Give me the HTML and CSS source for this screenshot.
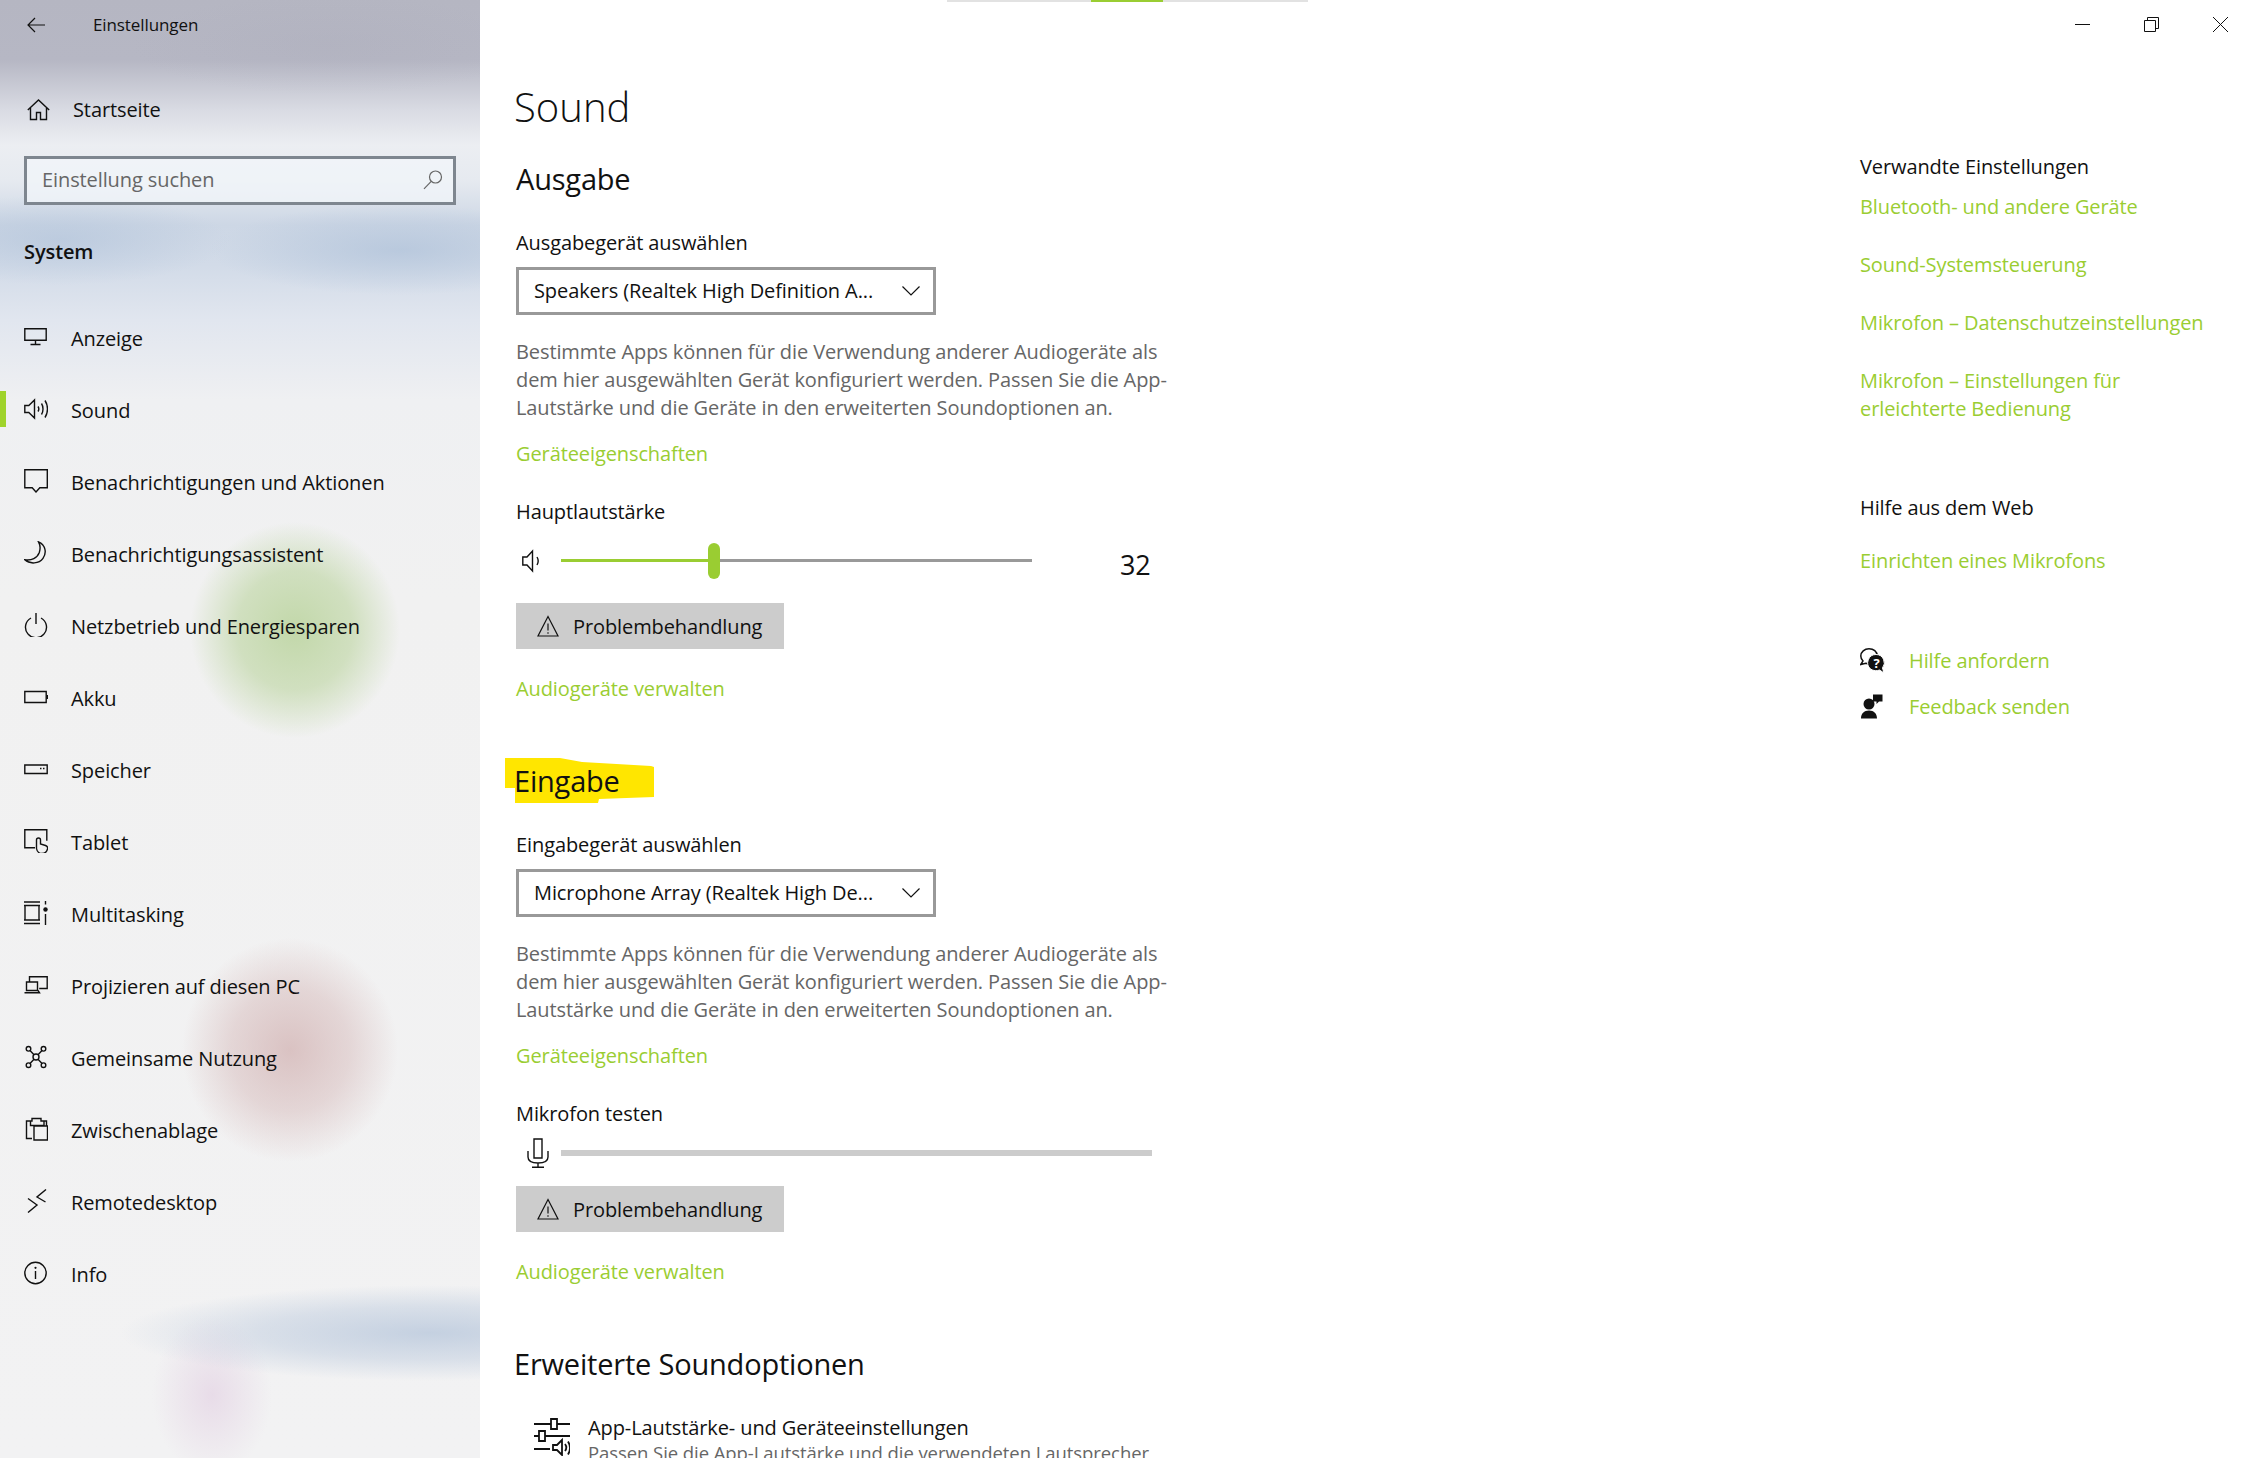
FILE: index.html
```html
<!DOCTYPE html>
<html lang="de">
<head>
<meta charset="utf-8">
<title>Einstellungen – Sound</title>
<link rel="stylesheet" href="styles.css">
</head>
<body>
<div class="window">
  <aside class="sidebar">
    <div class="side-head">
      <svg class="back" width="18" height="16" viewBox="0 0 18 16"><path d="M18 8H1M8 1 1 8l7 7"/></svg>
      <span class="app-title">Einstellungen</span>
    </div>
    <div class="home-row">
      <svg class="ico" width="24" height="24" viewBox="0 0 24 24"><path d="M.8 12 11.500 2 22.200 12M3.500 10v11.500h6v-7h4v7h6V10"/></svg>
      <span>Startseite</span>
    </div>
    <div class="search">
      <span class="search-text">Einstellung suchen</span>
      <svg class="search-ico" width="20" height="20" viewBox="0 0 20 20"><circle cx="12.500" cy="7" r="6"/><path d="M8.200 11.300 1 18.800"/></svg>
    </div>
    <div class="group">System</div>
    <nav class="nav">
      <div class="nav-item"><svg class="ico" width="24" height="24" viewBox="0 0 24 24"><path d="M.8 3.800h21.400v11.500H.8zM11.500 15.500v3.500M6.500 19.500h10"/></svg><span>Anzeige</span></div>
      <div class="nav-item active"><svg class="ico" width="24" height="24" viewBox="0 0 24 24"><path d="M.8 8.500h4L10.500 3v18l-5.700-5.500h-4zM14 9.500c1 1.500 1 3.500 0 5M17.500 6.500c2 3 2 8 0 11M21 3.500c3.300 5 3.300 12 0 17"/></svg><span>Sound</span></div>
      <div class="nav-item"><svg class="ico" width="24" height="24" viewBox="0 0 24 24"><path d="M.8.800h22.500v18h-7.500L12 23l-3.800-4.200H.8z"/></svg><span>Benachrichtigungen und Aktionen</span></div>
      <div class="nav-item"><svg class="ico" width="24" height="24" viewBox="0 0 24 24"><path d="M14.500.8c7 3 8.500 11 4.500 16.500S6 23.500.8 18.800c6.700 1.200 12.500-1.800 14.500-7.300 1.200-3.700 1-7.500-.8-10.700z"/></svg><span>Benachrichtigungsassistent</span></div>
      <div class="nav-item"><svg class="ico" width="24" height="24" viewBox="0 0 24 24"><path d="M7 5a10.500 10.500 0 1 0 10 0M12 0v11"/></svg><span>Netzbetrieb und Energiesparen</span></div>
      <div class="nav-item"><svg class="ico" width="24" height="24" viewBox="0 0 24 24"><path d="M.8 6.500h21.400v11H.8z"/><path class="solid" d="M22.500 10h1.500v4h-1.500z"/></svg><span>Akku</span></div>
      <div class="nav-item"><svg class="ico" width="24" height="24" viewBox="0 0 24 24"><path d="M.8 8h22.400v8.500H.8zM16 11.500h1.500M19 11.500h1.500"/></svg><span>Speicher</span></div>
      <div class="nav-item"><svg class="ico" width="24" height="24" viewBox="0 0 24 24"><path d="M11 18.800H.8V.8h22v11M12.500 19v-8a2 2 0 0 1 4 0v4l5 1.500c2 .8 2.500 2 2 3.500-.7 3-3 4.500-5.500 4.500s-5-2-5.500-5z"/></svg><span>Tablet</span></div>
      <div class="nav-item"><svg class="ico" width="24" height="24" viewBox="0 0 24 24"><path d="M0 1h16M0 4.500h16M1 4.500v14.500M15 4.500v14.500M0 19h16M0 22.500h16M21.500 0v3.500M21.500 13v11"/><circle class="solid" cx="21.500" cy="8.500" r="2.200"/></svg><span>Multitasking</span></div>
      <div class="nav-item"><svg class="ico" width="24" height="24" viewBox="0 0 24 24"><path d="M5.500 9V3.800h17.700v11.700h-8M2.500 9h11v8.500h-11zM.5 19.800h15l-1.500-2.300"/></svg><span>Projizieren auf diesen PC</span></div>
      <div class="nav-item"><svg class="ico" width="24" height="24" viewBox="0 0 24 24"><circle cx="12" cy="12" r="3"/><circle cx="4.500" cy="3.800" r="2.300"/><circle cx="19.500" cy="3.800" r="2.300"/><circle cx="4.500" cy="20.200" r="2.300"/><circle cx="19.500" cy="20.200" r="2.300"/><path d="M6 5.500 10 9.800M18 5.500 14 9.800M6 18.500l4-4.300M18 18.500l-4-4.300"/></svg><span>Gemeinsame Nutzung</span></div>
      <div class="nav-item"><svg class="ico" width="24" height="24" viewBox="0 0 24 24"><path d="M8 21.500H2.500V4H7M18 4h4.500v5M8 4V1.500h9V4h3v4.500H6.500V4zM10 9h13.500v14H10z"/></svg><span>Zwischenablage</span></div>
      <div class="nav-item"><svg class="ico" width="24" height="24" viewBox="0 0 24 24"><path d="M4 9.500l9 6.500-9 7.500M22 .5l-9 7.500 8.500 5"/></svg><span>Remotedesktop</span></div>
      <div class="nav-item"><svg class="ico" width="24" height="24" viewBox="0 0 24 24"><circle cx="11.500" cy="12" r="10.700"/><path d="M11.500 10v8"/><circle class="solid" cx="11.500" cy="6.800" r="1.100"/></svg><span>Info</span></div>
    </nav>
  </aside>

  <main class="content">
    <div class="strip"><span class="strip-done"></span></div>
    <div class="columns">
      <section class="page">
        <h1 class="title">Sound</h1>
        <h2 class="heading">Ausgabe</h2>
        <div class="label">Ausgabegerät auswählen</div>
        <div class="select"><span>Speakers (Realtek High Definition A...</span><svg class="chev" width="18" height="10" viewBox="0 0 18 10"><path d="M.5.500 9 9 17.500.5"/></svg></div>
        <p class="desc">Bestimmte Apps können für die Verwendung anderer Audiogeräte als<br>dem hier ausgewählten Gerät konfiguriert werden. Passen Sie die App-<br>Lautstärke und die Geräte in den erweiterten Soundoptionen an.</p>
        <a class="link link-props">Geräteeigenschaften</a>
        <div class="label label-gap">Hauptlautstärke</div>
        <div class="volume">
          <svg class="vol-ico" width="20" height="24" viewBox="0 0 20 24"><path d="M.8 8h4.200L10.500 2v20l-5.500-6H.8zM15 8c1.500 2.500 1.500 5.500 0 8"/></svg>
          <div class="track"><span class="track-fill"></span><span class="thumb"></span></div>
          <span class="vol-value">32</span>
        </div>
        <button class="btn btn-vol"><svg class="warn" width="22" height="22" viewBox="0 0 22 22"><path d="M11 1.500 21 21H1zM11 8.500v7"/><circle class="solid" cx="11" cy="18" r=".8"/></svg><span>Problembehandlung</span></button>
        <a class="link link-manage">Audiogeräte verwalten</a>

        <h2 class="heading heading-mark">Eingabe</h2>
        <div class="label label-sub">Eingabegerät auswählen</div>
        <div class="select"><span>Microphone Array (Realtek High De...</span><svg class="chev" width="18" height="10" viewBox="0 0 18 10"><path d="M.5.500 9 9 17.500.5"/></svg></div>
        <p class="desc">Bestimmte Apps können für die Verwendung anderer Audiogeräte als<br>dem hier ausgewählten Gerät konfiguriert werden. Passen Sie die App-<br>Lautstärke und die Geräte in den erweiterten Soundoptionen an.</p>
        <a class="link link-props">Geräteeigenschaften</a>
        <div class="label label-gap">Mikrofon testen</div>
        <div class="mic-row">
          <svg class="mic-ico" width="22" height="30" viewBox="0 0 22 30"><path d="M7 1h8v19H7zM1 13v6c0 4 3 6 10 6s10-2 10-6v-6M11 25v4M5 29.300h12"/></svg>
          <div class="meter"></div>
        </div>
        <button class="btn btn-mic"><svg class="warn" width="22" height="22" viewBox="0 0 22 22"><path d="M11 1.500 21 21H1zM11 8.500v7"/><circle class="solid" cx="11" cy="18" r=".8"/></svg><span>Problembehandlung</span></button>
        <a class="link link-manage">Audiogeräte verwalten</a>

        <h2 class="heading heading-adv">Erweiterte Soundoptionen</h2>
        <div class="app-row">
          <svg class="app-ico" width="36" height="38" viewBox="0 0 36 38"><path d="M0 6h36M0 18h36M0 31h16M20 12V1M8 23V13"/><path class="white" d="M17 1h6v10h-6zM5 13h6v10H5z"/><path d="M19 27h4l5-5v15l-5-5h-4zM31 26c1.500 2 1.500 5 0 7M34 23.500c2.500 4 2.500 9 0 13"/></svg>
          <div class="app-text">
            <div class="app-name">App-Lautstärke- und Geräteeinstellungen</div>
            <div class="app-sub">Passen Sie die App-Lautstärke und die verwendeten Lautsprecher</div>
          </div>
        </div>
      </section>

      <section class="rail">
        <div class="win-controls">
          <svg width="15" height="15" viewBox="0 0 15 15"><path d="M0 7.500h15"/></svg>
          <svg width="15" height="15" viewBox="0 0 15 15"><path d="M.5 3.500h11v11H.5zM3.500 3.500V.5h11v11h-3"/></svg>
          <svg width="15" height="15" viewBox="0 0 15 15"><path d="M0 0l15 15M15 0 0 15"/></svg>
        </div>
        <div class="rail-head rail-first">Verwandte Einstellungen</div>
        <a class="link rail-link rail-tight">Bluetooth- und andere Geräte</a>
        <a class="link rail-link">Sound-Systemsteuerung</a>
        <a class="link rail-link">Mikrofon – Datenschutzeinstellungen</a>
        <a class="link rail-link">Mikrofon – Einstellungen für<br>erleichterte Bedienung</a>
        <div class="rail-head rail-second">Hilfe aus dem Web</div>
        <a class="link rail-link rail-setup">Einrichten eines Mikrofons</a>
        <div class="help-row help-first">
          <svg class="help-ico" width="25" height="25" viewBox="0 0 25 25"><path class="outline" d="M9 .8C4.500.8.800 4 .8 8c0 2 .8 3.700 2.200 5L.8 16.500l5-1.200c1.200.5 2.200.7 3.200.7 4.500 0 8.200-3.300 8.200-8S13.500.8 9 .8z"/><path class="bubble" d="M16 6.500a8.300 8.300 0 0 0-5.500 14.500c3 2 6.500 2.200 9 1l4.500 3-1.500-5A8.300 8.300 0 0 0 16 6.500z"/><text class="help-q" x="16.500" y="19.500">?</text></svg>
          <a class="link">Hilfe anfordern</a>
        </div>
        <div class="help-row help-second">
          <svg class="help-ico" width="25" height="25" viewBox="0 0 25 25"><circle cx="9" cy="10" r="5.500"/><path d="M1 24.500c0-5 3-8 8-8s8 3 8 8zM13 .5h9.500v7H19l-2.500 2.500V7.500H13z"/></svg>
          <a class="link">Feedback senden</a>
        </div>
      </section>
    </div>
  </main>
</div>
</body>
</html>
```

FILE: styles.css
```css
* { box-sizing: border-box; }
html, body { margin: 0; padding: 0; height: 1458px; overflow: hidden; background: #fff; }
body { font-family: "Open Sans", "Noto Sans", sans-serif; font-size: 20px; line-height: 28px; color: #111; letter-spacing: -0.1px; }
svg { display: block; flex: none; fill: none; stroke: #111; stroke-width: 1.4; }
p, h1, h2 { margin: 0; font-weight: 400; }
.solid { fill: #111; stroke: none; }

.window { display: flex; height: 1458px; }

/* Sidebar with its blurred acrylic backdrop */
.sidebar {
  width: 480px; flex: none; height: 1458px; overflow: hidden;
  background:
    radial-gradient(ellipse 105px 108px at 295px 630px, rgba(176,206,142,.72), rgba(176,206,142,.5) 55%, rgba(176,206,142,0) 100%),
    radial-gradient(ellipse 108px 112px at 290px 1050px, rgba(203,165,165,.62), rgba(203,165,165,.36) 55%, rgba(203,165,165,0) 100%),
    radial-gradient(ellipse 310px 48px at 430px 1333px, rgba(185,200,220,.8), rgba(185,200,220,.45) 55%, rgba(185,200,220,0) 100%),
    radial-gradient(ellipse 60px 80px at 212px 1395px, rgba(225,205,225,.6), rgba(225,205,225,0) 100%),
    radial-gradient(ellipse 170px 45px at 60px 240px, rgba(170,190,215,.5), rgba(170,190,215,0) 100%),
    radial-gradient(ellipse 190px 45px at 400px 250px, rgba(170,190,215,.6), rgba(170,190,215,0) 100%),
    radial-gradient(ellipse 200px 50px at 330px 45px, rgba(165,165,180,.2), rgba(165,165,180,0) 100%),
    linear-gradient(180deg, #b5b6c2 0, #b6b7c4 60px, #d9dbe3 110px, #eceef2 145px, #e6eaf0 180px, #cdd7e5 225px, #d2dbe8 265px, #e1e6ef 320px, #eff0f2 400px, #f1f1f1 600px, #f2f2f3 1458px);
}
.side-head { height: 50px; display: flex; align-items: center; padding-left: 27px; }
.back { stroke-width: 1.2; }
.app-title { margin-left: 48px; font-size: 17px; }
.home-row { margin-top: 36px; height: 48px; padding-left: 27px; display: flex; align-items: center; gap: 22px; }
.search {
  margin: 22px 0 0 24px; width: 432px; height: 49px; padding: 0 10px 2px 15px;
  display: flex; align-items: center; justify-content: space-between;
  border: 3px solid #7e868f; background: rgba(242,245,250,.75);
}
.search-text { color: #666; }
.search-ico { stroke: #666; stroke-width: 1.2; }
.group { margin: 33px 0 0 24px; font-weight: 600; }
.nav { margin-top: 36px; }
.nav-item { position: relative; height: 72px; padding-left: 24px; display: flex; align-items: center; gap: 23px; }
.nav-item .ico { margin-top: -2px; }
.nav-item span { margin-top: 2px; }
.nav-item.active::before { content: ""; position: absolute; left: 0; top: 17px; width: 6px; height: 36px; background: #9fd32b; }

/* Main */
.content { flex: 1; min-width: 0; height: 1458px; overflow: hidden; }
.strip { height: 2px; margin-left: 467px; width: 361px; background: #e2e2e2; }
.strip-done { display: block; height: 2px; margin-left: 144px; width: 72px; background: #9acd32; }
.columns { display: flex; }
.page { width: 1380px; flex: none; padding-left: 36px; }
.title { margin-top: 77px; font-size: 40px; line-height: 56px; margin-left: -2px; font-weight: 300; letter-spacing: 0; }
.heading { margin-top: 24px; font-size: 29px; line-height: 40px; letter-spacing: -0.2px; }
.label { margin-top: 30px; }
.label-sub { margin-top: 30px; }
.label-gap { margin-top: 30px; }
.select {
  margin-top: 10px; width: 420px; height: 48px; padding: 0 13px 0 15px;
  display: flex; align-items: center; justify-content: space-between;
  border: 3px solid #999;
}
.chev { stroke-width: 1.2; }
.desc { margin-top: 23px; color: #666; }
.link { display: block; color: #9acd32; }
.link-props { margin-top: 18px; }
.volume { margin-top: 17px; height: 36px; display: flex; align-items: center; position: relative; }
.vol-ico { margin-left: 6px; }
.track { position: relative; margin: 0 0 2px 19px; width: 471px; height: 3px; background: #999; }
.track-fill { display: block; width: 147px; height: 3px; background: #9acd32; }
.thumb { position: absolute; left: 147px; top: -16px; width: 12px; height: 36px; border-radius: 6px; background: #9acd32; }
.vol-value { margin: 8px 0 0 88px; font-size: 27px; line-height: 40px; }
.btn {
  display: flex; align-items: center; gap: 14px; width: 268px; height: 46px; padding: 0 0 0 21px;
  border: 0; background: #ccc; color: #111; font: inherit; letter-spacing: inherit;
}
.btn span { margin-top: 2px; }
.btn-vol { margin-top: 24px; }
.btn-mic { margin-top: 18px; }
.warn { stroke-width: 1.2; }
.link-manage { margin-top: 26px; }
.heading-mark { position: relative; z-index: 0; margin-top: 58px; margin-left: -2px; }
.heading-mark::before {
  content: ""; position: absolute; z-index: -1; left: -9px; top: -3px; width: 149px; height: 45px; background: #ffe600;
  clip-path: polygon(0 0, 55px 0, 77px 4px, 146px 8px, 149px 9px, 149px 39px, 94px 41px, 93px 45px, 10px 45px, 10px 30px, 0 30px);
}
.mic-row { margin-top: 10px; height: 30px; display: flex; align-items: center; }
.mic-ico { margin-left: 11px; }
.meter { margin-left: 12px; width: 591px; height: 6px; background: #ccc; }
.heading-adv { margin-top: 58px; margin-left: -2px; }
.app-row { margin-top: 30px; display: flex; align-items: flex-start; padding-left: 18px; gap: 18px; }
.app-ico { margin-top: 4px; stroke-width: 1.8; }
.white { fill: #fff; }
.app-sub { margin-top: -3px; color: #666; font-size: 18.5px; letter-spacing: -0.07px; }

/* Right rail */
.rail { flex: 1; min-width: 0; }
.win-controls { margin-top: 15px; padding-right: 28px; display: flex; justify-content: flex-end; gap: 54px; }
.win-controls svg { stroke-width: 1; }
.rail-first { margin-top: 121px; }
.rail-link { margin-top: 30px; }
.rail-tight { margin-top: 12px; }
.rail-second { margin-top: 71px; }
.rail-setup { margin-top: 25px; }
.help-row { display: flex; align-items: center; gap: 24px; }
.help-first { margin-top: 72px; }
.help-second { margin-top: 18px; }
.help-ico { fill: #111; stroke: none; margin-top: -2px; }
.outline { fill: none; stroke: #111; stroke-width: 1.5; }
.bubble { stroke: #fff; stroke-width: 1; }
.help-q { fill: #fff; font-size: 13px; font-weight: 700; text-anchor: middle; letter-spacing: 0; }
```
